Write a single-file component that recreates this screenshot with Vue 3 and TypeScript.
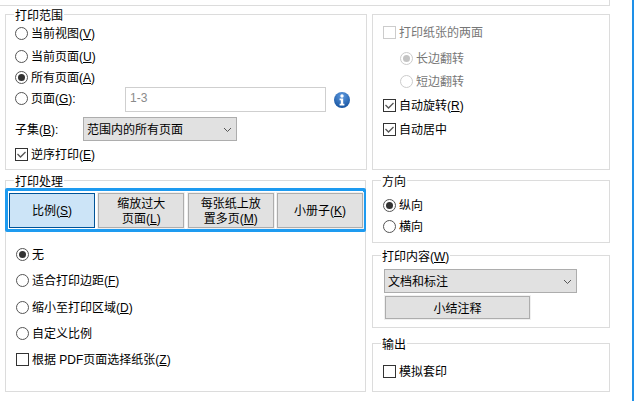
<script setup lang="ts">
const tabs = [
  { a: '比例', k: 'S', active: true },
  { a: '缩放过大', b: '页面', k: 'L' },
  { a: '每张纸上放', b: '置多页', k: 'M' },
  { a: '小册子', k: 'K' },
]
</script>

<template>
  <div class="page">
    <div class="topline"></div>
    <div class="columns">
      <div class="col left">
        <div class="box range">
          <span class="legend">打印范围</span>
          <label class="row r1"><i class="radio"></i>当前视图(<u>V</u>)</label>
          <label class="row r2"><i class="radio"></i>当前页面(<u>U</u>)</label>
          <label class="row r3"><i class="radio on"></i>所有页面(<u>A</u>)</label>
          <div class="row r4">
            <i class="radio"></i><span class="pagelabel">页面(<u>G</u>):</span>
            <span class="input">1-3</span>
            <svg class="info" width="16" height="16" viewBox="0 0 16 16">
              <defs>
                <radialGradient id="ig" cx="50%" cy="25%" r="80%">
                  <stop offset="0" stop-color="#5f9ae0" />
                  <stop offset="1" stop-color="#114f9c" />
                </radialGradient>
              </defs>
              <circle cx="8" cy="8" r="8" fill="url(#ig)" />
              <circle cx="8" cy="4" r="1.7" fill="#fff" />
              <path d="M5.6 6.6h3.6v5.2h1.2v1.6H5.6v-1.6h1.2V8.2H5.6z" fill="#fff" />
            </svg>
          </div>
          <div class="row r5">
            <span class="sublabel">子集(<u>B</u>):</span>
            <span class="select sel1">范围内的所有页面<svg class="chev" width="9" height="6" viewBox="0 0 9 6"><path d="M1 1l3.5 3.5L8 1" fill="none" stroke="#555" /></svg></span>
          </div>
          <label class="row r6"><i class="check"><svg width="11" height="11" viewBox="0 0 11 11"><path d="M1.5 5l3 3 5-5" fill="none" stroke="#555" stroke-width="1.3" /></svg></i>逆序打印(<u>E</u>)</label>
        </div>

        <div class="box handling">
          <span class="legend">打印处理</span>
          <div class="tabs">
            <button v-for="t in tabs" :key="t.k" class="tab" :class="{ active: t.active }">
              <span v-if="t.b">{{ t.a }}<br />{{ t.b }}(<u>{{ t.k }}</u>)</span>
              <span v-else>{{ t.a }}(<u>{{ t.k }}</u>)</span>
            </button>
          </div>
          <label class="row h1"><i class="radio on"></i>无</label>
          <label class="row h2"><i class="radio"></i>适合打印边距(<u>F</u>)</label>
          <label class="row h3"><i class="radio"></i>缩小至打印区域(<u>D</u>)</label>
          <label class="row h2"><i class="radio"></i>自定义比例</label>
          <label class="row h2"><i class="check"></i>根据 PDF页面选择纸张(<u>Z</u>)</label>
        </div>
      </div>

      <div class="col right">
        <div class="box duplex">
          <label class="row d1 dis"><i class="check"></i>打印纸张的两面</label>
          <label class="row d2 dis"><i class="radio on"></i>长边翻转</label>
          <label class="row d3 dis"><i class="radio"></i>短边翻转</label>
          <label class="row d4"><i class="check"><svg width="11" height="11" viewBox="0 0 11 11"><path d="M1.5 5l3 3 5-5" fill="none" stroke="#555" stroke-width="1.3" /></svg></i>自动旋转(<u>R</u>)</label>
          <label class="row d5"><i class="check"><svg width="11" height="11" viewBox="0 0 11 11"><path d="M1.5 5l3 3 5-5" fill="none" stroke="#555" stroke-width="1.3" /></svg></i>自动居中</label>
        </div>

        <div class="box orient">
          <span class="legend">方向</span>
          <label class="row o1"><i class="radio on"></i>纵向</label>
          <label class="row o2"><i class="radio"></i>横向</label>
        </div>

        <div class="box content">
          <span class="legend">打印内容(<u>W</u>)</span>
          <span class="select sel2">文档和标注<svg class="chev" width="9" height="6" viewBox="0 0 9 6"><path d="M1 1l3.5 3.5L8 1" fill="none" stroke="#555" /></svg></span>
          <button class="summary">小结注释</button>
        </div>

        <div class="box output">
          <span class="legend">输出</span>
          <label class="row p1"><i class="check"></i>模拟套印</label>
        </div>
      </div>
      <div class="edge"></div>
    </div>
  </div>
</template>

<style>
html, body { margin: 0; background: #fff; }
</style>

<style scoped>
.page {
  width: 636px;
  height: 401px;
  overflow: hidden;
  background: #fff;
  color: #000;
  font: 12px/16px "Liberation Sans", "Noto Sans CJK SC", sans-serif;
  box-sizing: border-box;
}
.topline {
  width: 610px;
  height: 6px;
  box-sizing: border-box;
  border-bottom: 1px solid #dcdcdc;
  border-right: 1px solid #dcdcdc;
}
.columns { display: flex; padding: 8px 0 0 5px; position: relative; }
.col { display: flex; flex-direction: column; }
.left { width: 362px; }
.right { width: 238px; margin-left: 5px; }
.edge { position: absolute; left: 632px; top: -6px; width: 2px; height: 402px; background: #1e90e8; }
.box {
  border: 1px solid #dcdcdc;
  box-sizing: border-box;
  position: relative;
}
.legend {
  position: absolute;
  top: -7px;
  left: 8px;
  padding: 0 1px;
  line-height: 16px;
  background: #fff;
  white-space: pre;
}
.row {
  display: flex;
  align-items: center;
  height: 16px;
  box-sizing: border-box;
  padding-top: 2px;
  white-space: pre;
}
u { text-underline-offset: 1px; }
.radio {
  width: 11px;
  height: 11px;
  border: 1px solid #555;
  border-radius: 50%;
  background: #fff;
  margin: -2px 3px 0 0;
  flex: none;
  position: relative;
}
.radio.on::after {
  content: "";
  position: absolute;
  inset: 2px;
  border-radius: 50%;
  background: #333;
}
.check {
  width: 11px;
  height: 11px;
  border: 1px solid #333;
  margin: -2px 3px 0 0;
  flex: none;
  background: #fff;
  display: flex;
}
.dis { color: #777; }
.dis .radio { border-color: #ccc; }
.dis .radio.on::after { background: #c4c4c4; }
.dis .check { border-color: #ccc; }

.range { height: 156px; }
.r1 { margin: 10px 0 0 9px; }
.r2 { margin: 7px 0 0 9px; }
.r3 { margin: 5px 0 0 9px; }
.r4 { margin: 2px 0 0 9px; height: 25px; padding-top: 0; }
.r4 .radio { margin-top: -3px; }
.pagelabel { width: 94px; margin-top: -1px; }
.input {
  width: 201px;
  height: 25px;
  border: 1px solid #cfcfcf;
  box-sizing: border-box;
  padding-left: 4px;
  color: #8a8a8a;
  line-height: 21px;
  flex: none;
}
.info { margin: 1px 0 0 8px; flex: none; }
.r5 { margin: 5px 0 0 9px; height: 24px; padding-top: 0; }
.sublabel { width: 68px; padding-top: 2px; }
.select {
  box-sizing: border-box;
  display: flex;
  align-items: center;
  position: relative;
  height: 24px;
  background: #e1e1e1;
  border: 1px solid #adadad;
  padding: 2px 0 0 3px;
}
.sel1 { width: 154px; }
.chev { position: absolute; right: 4px; top: 9px; }
.r6 { margin: 5px 0 0 9px; }

.handling { margin-top: 10px; height: 212px; width: 361px; }
.tabs {
  display: flex;
  gap: 3.33px;
  margin: 7px -1px 0;
  padding: 2px 1px 1px;
  height: 44px;
  box-sizing: border-box;
  border: 3px solid #1e9bf0;
  border-radius: 2px;
  position: relative;
}
.tab {
  width: 86px;
  flex: none;
  padding: 2px 0 0;
  margin: 0;
  background: #e1e1e1;
  border: 1px solid #adadad;
  box-shadow: 0 0 0 1px #f0f0f0;
  font: inherit;
  line-height: 15px;
  color: #000;
}
.tab.active { background: #cce4f7; border-color: #005499; box-shadow: none; }
.h1 { margin: 14px 0 0 10px; }
.h2 { margin: 10px 0 0 10px; }
.h3 { margin: 11px 0 0 10px; }

.duplex { height: 156px; }
.d1 { margin: 9px 0 0 10px; }
.d2 { margin: 10px 0 0 27px; }
.d3 { margin: 7px 0 0 27px; }
.d4 { margin: 8px 0 0 10px; }
.d5 { margin: 8px 0 0 10px; }

.orient { margin-top: 10px; height: 63px; }
.o1 { margin: 16px 0 0 10px; }
.o2 { margin: 5px 0 0 10px; }

.content { margin-top: 12px; height: 73px; }
.sel2 { width: 193px; margin: 13px 0 0 11px; }
.summary {
  display: block;
  width: 145px;
  height: 23px;
  margin: 3px 0 0 12px;
  padding: 2px 0 0;
  background: #e1e1e1;
  border: 1px solid #adadad;
  box-shadow: 0 0 0 1px #f0f0f0;
  font: inherit;
  color: #000;
}

.output { margin-top: 15px; height: 49px; }
.p1 { margin: 19px 0 0 10px; }
</style>
